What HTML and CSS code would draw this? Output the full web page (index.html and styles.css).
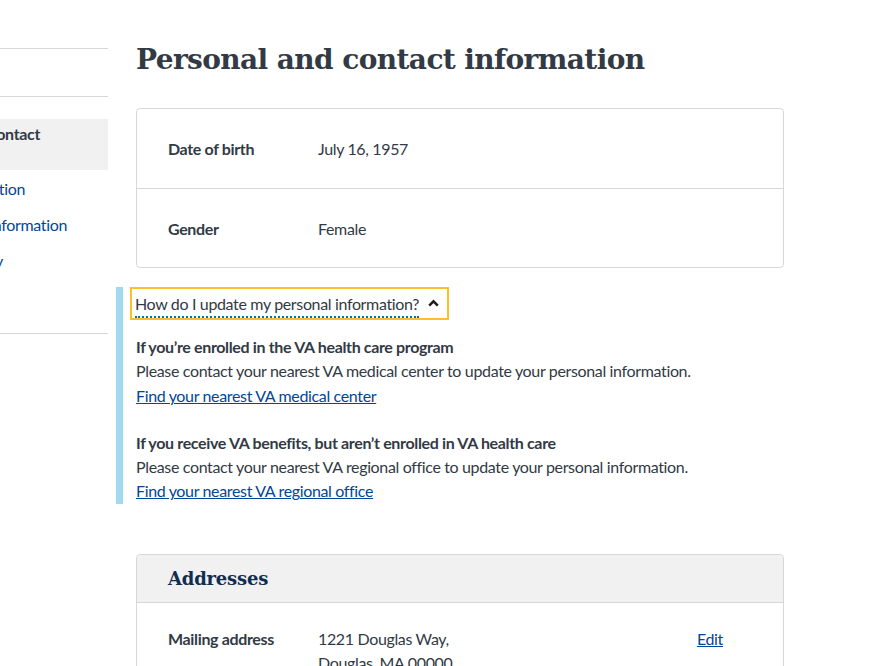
FILE: index.html
```html
<!DOCTYPE html>
<html lang="en">
<head>
<meta charset="utf-8">
<title>Personal and contact information</title>
<link rel="stylesheet" href="styles.css">
</head>
<body>
<div class="page">
  <aside class="sidenav">
    <div class="nav-head">Profile</div>
    <ul class="nav-list">
      <li class="nav-item active">Personal and contact</li>
      <li class="nav-item item-mil"><a href="#">Military information</a></li>
      <li class="nav-item item-dd"><a href="#">Direct deposit information</a></li>
      <li class="nav-item item-sec"><a href="#">Account security</a></li>
    </ul>
  </aside>
  <main class="content">
    <h1 class="title">Personal and contact information</h1>
    <section class="card">
      <div class="row">
        <div class="label">Date of birth</div>
        <div class="value">July 16, 1957</div>
      </div>
      <div class="row">
        <div class="label">Gender</div>
        <div class="value">Female</div>
      </div>
    </section>
    <div class="info">
      <button class="info-toggle" type="button"><span class="info-text">How do I update my personal information?</span>
        <svg class="chev" width="11" height="8" viewBox="0 0 11 8" aria-hidden="true"><path d="M1.2 6.6 L5.5 2.3 L9.8 6.6" fill="none" stroke="#1b1b1b" stroke-width="2.4"/></svg>
      </button>
      <div class="info-body">
        <p><strong>If you’re enrolled in the VA health care program</strong><br>
        Please contact your nearest VA medical center to update your personal information.<br>
        <a href="#">Find your nearest VA medical center</a></p>
        <p><strong>If you receive VA benefits, but aren’t enrolled in VA health care</strong><br>
        Please contact your nearest VA regional office to update your personal information.<br>
        <a href="#">Find your nearest VA regional office</a></p>
      </div>
    </div>
    <section class="card addresses">
      <h2 class="card-head">Addresses</h2>
      <div class="row addr">
        <div class="label">Mailing address</div>
        <div class="value">1221 Douglas Way,<br>Douglas, MA 00000</div>
        <a class="edit" href="#">Edit</a>
      </div>
    </section>
  </main>
</div>
</body>
</html>
```
FILE: styles.css
```css
* { box-sizing: border-box; }
html, body { margin: 0; padding: 0; background: #fff; overflow: hidden; }
body {
  font-family: "Lato", "Noto Sans", sans-serif;
  font-size: 16px;
  letter-spacing: -0.35px;
  color: #323a45;
  height: 666px;
}
a { color: #004795; }
.page {
  display: flex;
  align-items: flex-start;
  gap: 28px;
}
.sidenav {
  flex: none;
  width: 280px;
  margin-left: -172px;
  margin-top: 48px;
  border-top: 1px solid #d6d7d9;
  border-bottom: 1px solid #d6d7d9;
  padding-bottom: 54px;
}
.nav-head {
  height: 48px;
  border-bottom: 1px solid #d6d7d9;
  padding: 12px 16px;
  color: #fff;
}
.nav-list {
  list-style: none;
  margin: 22px 0 0;
  padding: 0;
}
.nav-item {
  height: 36px;
  line-height: 36px;
  text-align: right;
  white-space: nowrap;
}
.nav-item a { text-decoration: none; color: #004795; }
.nav-item.active {
  background: #f1f1f1;
  font-weight: 700;
  height: 51px;
  line-height: 30px;
  padding-top: 0;
  padding-right: 68px;
  margin-bottom: 1px;
}
.item-mil { padding-right: 83px; }
.item-dd { padding-right: 41px; }
.item-sec { padding-right: 105px; }

.content {
  flex: none;
  width: 648px;
}
.title {
  font-family: "DejaVu Serif", serif;
  font-weight: 700;
  font-size: 28px;
  line-height: 40px;
  margin: 40px 0 28px;
  color: #323a45;
  letter-spacing: -0.6px;
}
.card {
  border: 1px solid #d6d7d9;
  border-radius: 4px;
}
.row {
  display: grid;
  grid-template-columns: 150px 1fr;
  align-items: center;
  height: 79px;
  padding: 0 31px;
}
.row + .row { border-top: 1px solid #d6d7d9; height: 79px; }
.label { font-weight: 700; }
.info {
  margin: 19px 0 0 -20px;
  border-left: 7px solid #a1d9ee;
  padding-left: 13px;
}
.info-toggle {
  display: flex;
  align-items: center;
  gap: 9px;
  margin-left: -6px;
  height: 33px;
  padding: 0 8px 0 3px;
  border: 2px solid #ffbe2e;
  background: #fff;
  font: inherit;
  letter-spacing: inherit;
  color: #323a45;
}
.info-text {
  border-bottom: 2px dotted #0071bb;
  line-height: 24px;
  padding-top: 2px;
}
.chev { display: block; margin-top: -2px; }
.info-body { padding-top: 15px; }
.info-body p {
  margin: 0 0 23px;
  line-height: 24.3px;
}
.info-body p:last-child { margin-bottom: 0; }
.addresses { margin-top: 50px; }
.card-head {
  margin: 0;
  height: 48px;
  background: #f1f1f1;
  border-bottom: 1px solid #d6d7d9;
  border-radius: 4px 4px 0 0;
  padding: 0 31px;
  font-family: "DejaVu Serif", serif;
  font-size: 18px;
  letter-spacing: -0.2px;
  line-height: 48px;
  color: #112e51;
}
.row.addr {
  grid-template-columns: 150px 1fr auto;
  align-items: start;
  height: auto;
  padding: 24px 60px 0 31px;
  line-height: 24px;
}
```
